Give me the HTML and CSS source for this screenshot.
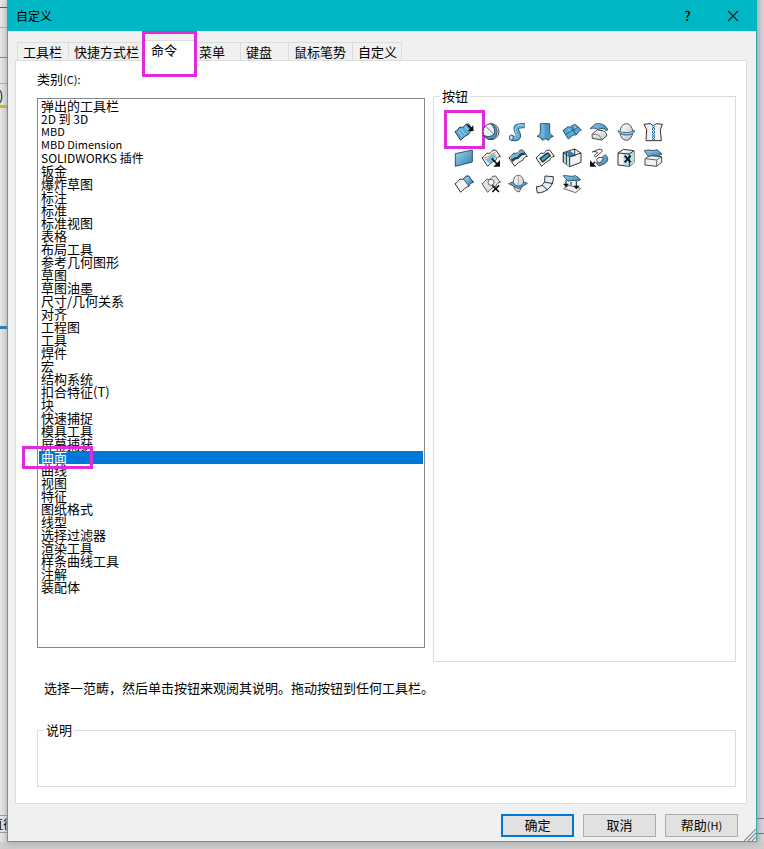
FILE: index.html
```html
<!DOCTYPE html>
<html lang="zh-CN">
<head>
<meta charset="utf-8">
<meta name="viewport" content="width=device-width, initial-scale=1">
<title>自定义</title>
<link rel="stylesheet" href="styles.css">
</head>
<body>
<svg width="0" height="0" class="defs" aria-hidden="true">
  <defs>
    <linearGradient id="blue" x1="0" y1="0" x2="1" y2="1"><stop offset="0" stop-color="#9ed4ee"/><stop offset="1" stop-color="#2f7fab"/></linearGradient>
    <linearGradient id="gray" x1="0" y1="0" x2="1" y2="1"><stop offset="0" stop-color="#ffffff"/><stop offset="1" stop-color="#c4c4c8"/></linearGradient>
    <path id="sheet" d="M3 29C9 27 13 18 18 15C27 19 31 12 35 7L44 6L58 25C50 26 47 30 44 37C36 40 28 46 20 55Z"/>
  </defs>
</svg>
<div class="desktop">
  <div class="edge edge-left"><span class="paren">)</span><span class="status">直径</span></div>
  <main class="dialog">
    <header class="titlebar">
      <h1>自定义</h1>
      <button class="caption help" type="button">?</button>
      <button class="caption" type="button" aria-label="关闭"><svg width="12" height="12" viewBox="0 0 12 12"><path d="M1 1L11 11M11 1L1 11" stroke="#0c2326" stroke-width="1.2"/></svg></button>
    </header>
    <nav class="tabs">
      <button type="button">工具栏</button>
      <button type="button" class="wide">快捷方式栏</button>
      <button type="button" class="active">命令<span class="mark mark-tab"></span></button>
      <button type="button" class="after">菜单</button>
      <button type="button" class="short">键盘</button>
      <button type="button">鼠标笔势</button>
      <button type="button" class="last">自定义</button>
    </nav>
    <section class="panel">
      <div class="columns">
        <div class="categories">
          <label for="cat">类别<small>(C):</small></label>
          <div class="listwrap">
            <select id="cat" size="38">
              <option>弹出的工具栏</option><option class="mixed">2D 到 3D</option><option class="latin">MBD</option><option class="latin">MBD Dimension</option><option class="mixed">SOLIDWORKS 插件</option>
              <option>钣金</option><option>爆炸草图</option><option>标注</option><option>标准</option><option>标准视图</option><option>表格</option>
              <option>布局工具</option><option>参考几何图形</option><option>草图</option><option>草图油墨</option><option>尺寸/几何关系</option>
              <option>对齐</option><option>工程图</option><option>工具</option><option>焊件</option><option>宏</option><option>结构系统</option>
              <option>扣合特征(T)</option><option>块</option><option>快速捕捉</option><option>模具工具</option><option>屏幕捕获</option>
              <option selected>曲面</option><option>曲线</option><option>视图</option><option>特征</option><option>图纸格式</option>
              <option>线型</option><option>选择过滤器</option><option>渲染工具</option><option>样条曲线工具</option><option>注解</option><option>装配体</option>
            </select>
            <span class="mark mark-row"></span>
          </div>
        </div>
        <fieldset class="buttons">
          <legend>按钮</legend>
          <div class="icons">
            <button type="button" aria-label="拉伸曲面"><svg viewBox="0 0 60 60"><use href="#sheet" fill="#5cacd3" stroke="#333"/><path d="M13 27L25 43M20 21L34 38M33 13L45 28" stroke="#a8d8ef" stroke-width="3"/><path d="M40 9L54 23" stroke="#111" stroke-width="4"/><path d="M58 10V27H41Z" fill="#111"/></svg><span class="mark mark-icon"></span></button>
            <button type="button" aria-label="旋转曲面"><svg viewBox="0 0 60 60"><circle cx="30" cy="29" r="24" fill="#edf3f6" stroke="#444"/><path d="M29 5C45 9 52 26 46 40L40 47C31 54 16 53 8 40C20 46 33 44 39 36C44 26 38 12 29 5Z" fill="#4a9cc6" stroke="#234f69"/><path d="M13 12L38 36" stroke="#444" stroke-width="2"/></svg></button>
            <button type="button" aria-label="扫描曲面"><svg viewBox="0 0 60 60"><path d="M9 47C34 55 34 41 27 29C20 14 27 10 50 11" fill="none" stroke="#234f69" stroke-width="16"/><path d="M9 47C34 55 34 41 27 29C20 14 27 10 50 11" fill="none" stroke="#61aed3" stroke-width="11"/><path d="M14 45C28 47 27 40 23 30C18 14 29 8 46 9" fill="none" stroke="#aadbef" stroke-width="3"/><ellipse cx="10" cy="47" rx="6" ry="8" fill="#b9e0f1" stroke="#234f69"/></svg></button>
            <button type="button" aria-label="放样曲面"><svg viewBox="0 0 60 60"><path d="M16 5H44V31C45 36 49 40 55 43L46 47L41 55L31 50L22 55L17 47L6 43C13 39 16 36 16 29Z" fill="#4b9ac2" stroke="#315568"/><path d="M18 7H29V48L10 43C17 39 18 35 18 29Z" fill="#6cb4d7"/></svg></button>
            <button type="button" aria-label="边界曲面"><svg viewBox="0 0 60 60"><path d="M3 26L18 14C25 20 30 6 41 8L58 24C49 24 48 38 41 39C31 37 27 46 19 51Z" fill="#58a9d1" stroke="#234f69"/><path d="M11 37C23 28 34 25 49 16M29 15L41 36" fill="none" stroke="#205b7b" stroke-width="3"/><path d="M18 20L25 29M37 13L43 19" stroke="#a9daf0" stroke-width="3"/></svg></button>
            <button type="button" aria-label="等距曲面"><svg viewBox="0 0 60 60"><path d="M9 37L25 23C34 28 45 22 52 35L54 41L38 54L10 49Z" fill="url(#gray)" stroke="#444"/><path d="M10 38C23 36 32 37 38 52" fill="none" stroke="#777"/><path d="M3 20L19 6C33 3 48 6 56 22L53 27C46 18 38 17 28 24C22 18 13 17 3 20Z" fill="url(#blue)" stroke="#315568"/></svg></button>
            <button type="button" aria-label="自由形"><svg viewBox="0 0 60 60"><ellipse cx="31" cy="30" rx="19" ry="25" fill="url(#gray)" stroke="#555"/><path d="M6 26C18 34 44 34 56 25C57 42 11 45 6 26Z" fill="#54a6cf" stroke="#2c6786"/><path d="M11 30C24 37 43 36 53 29" fill="none" stroke="#a3d8ee"/></svg></button>
            <button type="button" aria-label="剪裁曲面"><svg viewBox="0 0 60 60"><path d="M3 7L22 5L31 11L40 5L58 7L52 23L55 56H9L11 23Z" fill="#f2f2f3" stroke="#333"/><path d="M27 13L36 21L27 30L36 38L27 46L36 54M36 13L27 21L36 30L27 38L36 46L27 54" fill="none" stroke="#1d70a5"/></svg></button>

            <button type="button" aria-label="平面区域"><svg viewBox="0 0 60 60"><path d="M4 17L55 6V42L4 55Z" fill="url(#blue)" stroke="#315568"/></svg></button>
            <button type="button" aria-label="延伸曲面"><svg viewBox="0 0 60 60"><use href="#sheet" fill="#f4f4f4" stroke="#333"/><path d="M12 34C22 31 27 23 40 17L49 27C40 31 34 42 26 47Z" fill="#77bee0"/><path d="M9 30C25 28 30 18 44 13" fill="none" stroke="#c58a42" stroke-width="3"/><path d="M32 31L51 51" stroke="#111" stroke-width="5"/><path d="M57 36V56H37Z" fill="#111"/></svg></button>
            <button type="button" aria-label="缝合曲面"><svg viewBox="0 0 60 60"><use href="#sheet" fill="#f4f4f4" stroke="#333"/><path d="M6 29L18 17C27 20 32 13 36 9L43 8L49 15C39 13 35 23 27 26C20 25 16 29 9 34Z" fill="#67b0d5"/><path d="M9 34C22 24 25 29 31 23C36 15 42 13 49 15L53 20C38 20 34 31 29 34C22 32 20 37 14 42Z" fill="#1d4155"/></svg></button>
            <button type="button" aria-label="填充曲面"><svg viewBox="0 0 60 60"><use href="#sheet" fill="#f4f4f4" stroke="#333"/><path d="M15 31C25 27 28 19 39 15L46 24C37 26 34 35 23 42Z" fill="#4aa0c8" stroke="#1d3948" stroke-width="4"/></svg></button>
            <button type="button" aria-label="中面"><svg viewBox="0 0 60 60"><path d="M4 14L38 3L57 15V43L23 56L4 43Z" fill="#f2f2f2" stroke="#333"/><path d="M4 14L23 26V56L4 43Z" fill="#b6ddea"/><path d="M13 11L23 8L41 20V24L23 28Z" fill="#3483ae"/><path d="M4 14L23 26L57 15M23 26V56M4 14V43M38 3V19M13 11V48" fill="none" stroke="#333"/></svg></button>
            <button type="button" aria-label="延展曲面"><svg viewBox="0 0 60 60"><path d="M10 12L29 4C42 2 43 10 34 15L20 27C11 25 20 18 26 14C20 10 15 10 10 12Z" fill="#f2f2f2" stroke="#444"/><path d="M22 45C36 43 34 28 49 20C62 31 56 43 43 49L30 54Z" fill="url(#blue)" stroke="#315568"/><path d="M25 31C20 38 25 43 33 45L44 31C38 28 30 27 25 31Z" fill="#f4f4f4" stroke="#444"/><path d="M19 41L8 51" stroke="#111" stroke-width="4"/><path d="M3 37V56H22Z" fill="#111"/></svg></button>
            <button type="button" aria-label="删除面"><svg viewBox="0 0 60 60"><path d="M6 15L22 4L54 8V44L40 55L6 51Z" fill="#f2f2f2" stroke="#333"/><path d="M22 15L54 9V44L40 54L22 50Z" fill="#b4dff0"/><path d="M6 15L40 18L54 8M40 18V55" fill="none" stroke="#333"/><path d="M26 23L44 43M44 23L26 43" stroke="#111" stroke-width="6"/></svg></button>
            <button type="button" aria-label="替换面"><svg viewBox="0 0 60 60"><path d="M6 32L20 23L56 26V43L41 55L6 51Z" fill="#f2f2f2" stroke="#444"/><path d="M6 32L41 36L56 26M41 36V55" fill="none" stroke="#666"/><path d="M4 8C19 2 28 12 42 5L57 18C47 27 32 17 17 26Z" fill="url(#blue)" stroke="#315568"/></svg></button>

            <button type="button" aria-label="剪裁"><svg viewBox="0 0 60 60"><use href="#sheet" fill="#f4f4f4" stroke="#333"/><path d="M28 16C31 14 33 10 35 7L44 6L58 25C50 26 47 30 44 37C41 30 34 22 28 16Z" fill="url(#blue)" stroke="#315568"/></svg></button>
            <button type="button" aria-label="删除孔"><svg viewBox="0 0 60 60"><use href="#sheet" fill="#e3e3e5" stroke="#555"/><circle cx="30" cy="25" r="9" fill="#fff" stroke="#666"/><path d="M34 34L54 54M54 34L34 54" stroke="#111" stroke-width="5"/></svg></button>
            <button type="button" aria-label="分型面"><svg viewBox="0 0 60 60"><path d="M15 28C17 10 22 4 31 4C41 4 46 13 48 29L33 54C23 52 17 43 15 28Z" fill="url(#gray)" stroke="#555"/><path d="M2 29L15 24C18 32 25 36 32 36C42 35 45 30 47 24L58 28L32 44Z" fill="#64b0d5" stroke="#285f7c"/><path d="M31 5V34" stroke="#aaa"/></svg></button>
            <button type="button" aria-label="直纹曲面"><svg viewBox="0 0 60 60"><path d="M4 38C18 39 29 30 29 19L30 6L55 8C57 34 37 56 7 57Z" fill="#e3f1f7" stroke="#333"/><path d="M28 24L54 29M21 33L39 49" stroke="#333"/></svg></button>
            <button type="button" aria-label="拉伸到面"><svg viewBox="0 0 60 60"><path d="M5 44L20 34L56 43L41 56Z" fill="#f2f2f2" stroke="#666"/><path d="M4 5C20 4 27 10 41 5L56 17C45 25 32 15 18 22Z" fill="url(#blue)" stroke="#315568"/><path d="M12 19V33M43 22V39M27 23V34" stroke="#174d6c" stroke-width="4"/><path d="M3 29H21L12 40ZM34 35H53L43 46Z" fill="#111"/></svg></button>
          </div>
        </fieldset>
      </div>
      <p class="hint">选择一范畴，然后单击按钮来观阅其说明。拖动按钮到任何工具栏。</p>
      <fieldset class="description"><legend>说明</legend></fieldset>
    </section>
    <footer class="actions">
      <button type="button" class="primary">确定</button>
      <button type="button">取消</button>
      <button type="button">帮助<small>(H)</small></button>
      <svg class="grip" width="12" height="12" viewBox="0 0 12 12" aria-hidden="true"><path d="M0 12L12 0M4 12L12 4M8 12L12 8" stroke="#858991" stroke-width="1.2"/></svg>
    </footer>
  </main>
  <div class="edge edge-right"></div>
</div>
</body>
</html>
```
FILE: styles.css
```css
* { box-sizing: border-box; }

body {
  margin: 0;
  background: #cdcdcd;
  color: #000;
  font: 13px/18px "Noto Sans CJK SC", sans-serif;
}

button, select { font: inherit; color: inherit; }
button { padding: 0; border: 0; background: none; }
small { font-size: 11px; }
.defs { position: absolute; }

.desktop {
  display: grid;
  grid-template-columns: 7px minmax(0, 1fr) 7px;
  min-height: 100vh;
  padding-bottom: 7px;
  background: linear-gradient(#cdcdcd, #cdcdcd) bottom / 100% 7px no-repeat;
}

.edge { overflow: hidden; }

.edge-left {
  display: flex;
  flex-direction: column;
  justify-content: space-between;
  padding: 87px 0 9px;
  background:
    linear-gradient(#555, #555) 0 7px / 7px 1px no-repeat,
    linear-gradient(#aaa, #aaa) 0 27px / 7px 1px no-repeat,
    linear-gradient(#888, #888) 0 57px / 7px 1px no-repeat,
    linear-gradient(#aaa, #aaa) 0 83px / 7px 1px no-repeat,
    linear-gradient(#d7ae35, #d7ae35) 0 105px / 7px 3px no-repeat,
    linear-gradient(#2781ab, #2781ab) 0 326px / 7px 3px no-repeat,
    linear-gradient(90deg, #e6e8e0, #d4d4da);
}

.paren { margin-left: -1px; }

.status {
  width: 26px;
  height: 18px;
  margin-left: -9px;
  border: solid #999;
  border-width: 1px 0;
  font-size: 12px;
  line-height: 16px;
}

.edge-right {
  background:
    linear-gradient(#777, #777) 0 818px / 7px 1px no-repeat,
    linear-gradient(#777, #777) 0 833px / 7px 1px no-repeat,
    linear-gradient(90deg, #acb1b6, #cbcbd4 4px, #d5d8d6);
}

.dialog {
  display: flex;
  flex-direction: column;
  border: 1px solid #38aaa8;
  border-top: 0;
  background: #f0f0f0;
  box-shadow: 0 2px 6px #8886;
}

.titlebar {
  display: flex;
  align-items: center;
  height: 31px;
  margin: 0 -1px;
  padding-left: 9px;
  background: #00b7c5;
}

.titlebar h1 { flex: 1; margin: 0; font-size: 12px; font-weight: 400; }
.caption { display: grid; place-items: center; width: 46px; height: 30px; }
.caption:last-child { width: 48px; }
.help { width: 43px; font-weight: 500; }

.tabs { display: flex; align-items: flex-end; height: 29px; padding-left: 9px; }

.tabs button {
  height: 18px;
  padding: 0 6px 3px 5px;
  border: 1px solid #dcdcdc;
  border-width: 1px 0 0 1px;
}

.tabs .wide { padding-right: 5px; }

.tabs .active {
  position: relative;
  z-index: 1;
  height: 21px;
  margin-bottom: -1px;
  padding: 0 19px 5px 6px;
  background: #fff;
}

.tabs .after { padding-right: 15px; padding-left: 2px; }
.tabs .short { padding-right: 16px; }
.tabs .last { padding-right: 4px; border-right-width: 1px; }

.mark { position: absolute; border: 3px solid #e02bdd; pointer-events: none; }
.mark-tab { inset: -10px -1px -16px -3px; }
.mark-row { top: 348px; left: -15px; width: 71px; height: 23px; }
.mark-icon { inset: -9px -8px -4px -6px; }

.panel {
  display: flex;
  flex: 1;
  flex-direction: column;
  margin: 0 9px 0 7px;
  padding: 9px 10px 16px 21px;
  border: 1px solid #dcdcdc;
  background: #fff;
}

.columns {
  display: grid;
  flex: 1;
  grid-template-columns: 388fr 303fr;
  gap: 8px;
}

.categories { display: flex; flex-direction: column; gap: 10px; padding-bottom: 14px; }
.listwrap { position: relative; display: flex; flex: 1; }

select {
  width: 100%;
  padding: 1px;
  border: 1px solid #828790;
  border-radius: 0;
  outline: 0;
  background: #fff;
  overflow: hidden;
}

option {
  display: flex;
  align-items: center;
  min-height: 13px;
  height: 13px;
  padding: 0 2px 3px;
  overflow: visible;
}

.latin { font-size: 11px; }
.mixed { font-size: 12px; }

option:checked {
  background: linear-gradient(#0078d7, #0078d7);
  -webkit-text-fill-color: #fff;
}

fieldset { min-width: 0; margin: 0; padding: 0; border: 1px solid #dcdcdc; }
legend { margin-left: 6px; padding: 0 2px; }
.buttons { margin-top: 17px; }

.icons {
  display: grid;
  grid-template-columns: repeat(auto-fill, 27px);
  grid-auto-rows: 26px;
  padding: 14px 60px 0 16px;
}

.icons button { position: relative; display: grid; place-items: center; }
.icons svg { width: 20px; height: 20px; fill: none; stroke-width: 3; stroke-linejoin: round; }

.hint { margin: 17px 0 24px 7px; }
.description { height: 66px; }

.actions {
  position: relative;
  display: flex;
  justify-content: flex-end;
  gap: 9px;
  padding: 10px 18px 4px;
}

.actions button { width: 73px; height: 23px; padding-bottom: 2px; border: 1px solid #adadad; background: #e1e1e1; }
.actions .primary { border: 2px solid #0078d7; }
.grip { position: absolute; right: 0; bottom: 0; }
```
